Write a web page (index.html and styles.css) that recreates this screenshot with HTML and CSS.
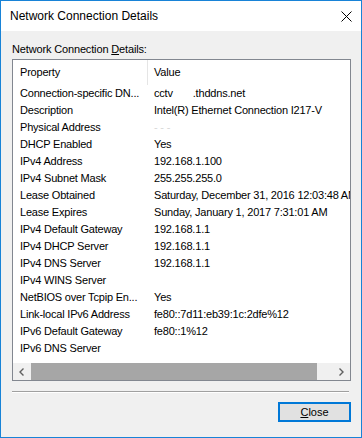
FILE: index.html
```html
<!DOCTYPE html>
<html lang="en">
<head>
  <meta charset="UTF-8" />
  <title>Network Connection Details</title>
  <link rel="stylesheet" href="styles.css">
</head>
<body>
  <div class="window">
    <div class="titlebar">
      <span class="title">Network Connection Details</span>
      <svg class="close-x" width="11" height="11" viewBox="0 0 11 11">
        <path d="M0.5 0.5 L10.5 10.5 M10.5 0.5 L0.5 10.5" stroke="#000" stroke-width="1" fill="none" />
      </svg>
    </div>

    <div class="content">
      <div class="label">Network Connection <u>D</u>etails:</div>

      <div class="listbox">
        <div class="row header">
          <div class="prop">Property</div>
          <div class="val">Value</div>
        </div>

        <div class="rows">
          <div class="row"><div class="prop">Connection-specific DN...</div><div class="val">cctv<span class="blur"></span>.thddns.net</div></div>
          <div class="row"><div class="prop">Description</div><div class="val">Intel(R) Ethernet Connection I217-V</div></div>
          <div class="row"><div class="prop">Physical Address</div><div class="val"><span class="faint">- - -</span></div></div>
          <div class="row"><div class="prop">DHCP Enabled</div><div class="val">Yes</div></div>
          <div class="row"><div class="prop">IPv4 Address</div><div class="val">192.168.1.100</div></div>
          <div class="row"><div class="prop">IPv4 Subnet Mask</div><div class="val">255.255.255.0</div></div>
          <div class="row"><div class="prop">Lease Obtained</div><div class="val">Saturday, December 31, 2016 12:03:48 AM</div></div>
          <div class="row"><div class="prop">Lease Expires</div><div class="val">Sunday, January 1, 2017 7:31:01 AM</div></div>
          <div class="row"><div class="prop">IPv4 Default Gateway</div><div class="val">192.168.1.1</div></div>
          <div class="row"><div class="prop">IPv4 DHCP Server</div><div class="val">192.168.1.1</div></div>
          <div class="row"><div class="prop">IPv4 DNS Server</div><div class="val">192.168.1.1</div></div>
          <div class="row"><div class="prop">IPv4 WINS Server</div><div class="val"></div></div>
          <div class="row"><div class="prop">NetBIOS over Tcpip En...</div><div class="val">Yes</div></div>
          <div class="row"><div class="prop">Link-local IPv6 Address</div><div class="val">fe80::7d11:eb39:1c:2dfe%12</div></div>
          <div class="row"><div class="prop">IPv6 Default Gateway</div><div class="val">fe80::1%12</div></div>
          <div class="row"><div class="prop">IPv6 DNS Server</div><div class="val"></div></div>
        </div>

        <div class="hscroll">
          <div class="arrow">
            <svg width="5" height="8" viewBox="0 0 5 8"><polyline points="4.5,0.5 1,4 4.5,7.5" stroke="#606060" stroke-width="1.4" fill="none" /></svg>
          </div>
          <div class="track"><div class="thumb"></div></div>
          <div class="arrow">
            <svg width="5" height="8" viewBox="0 0 5 8"><polyline points="0.5,0.5 4,4 0.5,7.5" stroke="#606060" stroke-width="1.4" fill="none" /></svg>
          </div>
        </div>
      </div>

      <div class="separator"></div>

      <div class="buttons">
        <button class="btn"><u>C</u>lose</button>
      </div>
    </div>
  </div>
</body>
</html>
```

FILE: styles.css
```css
* {
  box-sizing: border-box;
  margin: 0;
  padding: 0;
}

body {
  font-family: 'Liberation Sans', Arial, sans-serif;
  font-size: 11px;
  color: #000;
  background: #f0f0f0;
}

.window {
  width: 362px;
  height: 438px;
  border: 1px solid #1883d7;
  display: flex;
  flex-direction: column;
}

.titlebar {
  height: 30px;
  background: #fff;
  display: flex;
  align-items: center;
  justify-content: space-between;
  padding: 0 9px;
}

.title {
  font-size: 12px;
}

.content {
  flex: 1;
  background: #f0f0f0;
  padding: 0 10px 0 11px;
  display: flex;
  flex-direction: column;
}

.label {
  margin-top: 11px;
  line-height: 14px;
  letter-spacing: -0.15px;
}

.listbox {
  margin-top: 3px;
  height: 322px;
  border: 1px solid #828790;
  background: #fff;
  display: flex;
  flex-direction: column;
  overflow: hidden;
}

.rows {
  flex: 1;
}

.row {
  display: flex;
  height: 17px;
  line-height: 17px;
  white-space: nowrap;
  letter-spacing: -0.2px;
}

.row.header {
  height: 25px;
  line-height: 25px;
}

.prop {
  width: 135px;
  flex-shrink: 0;
  padding-left: 7px;
  overflow: hidden;
}

.header .prop {
  border-right: 1px solid #e5e5e5;
}

.val {
  padding-left: 6px;
  flex-shrink: 0;
}

.blur {
  display: inline-block;
  width: 20px;
}

.faint {
  color: #d8d8d8;
}

.hscroll {
  height: 17px;
  display: flex;
  background: #f0f0f0;
}

.arrow {
  width: 17px;
  display: flex;
  align-items: center;
  justify-content: center;
}

.track {
  flex: 1;
  padding: 0 0 0 1px;
}

.thumb {
  width: 286px;
  height: 100%;
  background: #a6a6a6;
}

.separator {
  margin-top: 10px;
  margin-right: 2px;
  border-top: 1px solid #a0a0a0;
  border-bottom: 1px solid #fff;
}

.buttons {
  display: flex;
  justify-content: flex-end;
  margin-top: 9px;
}

.btn {
  width: 73px;
  height: 20px;
  border: 2px solid #0078d7;
  background: #e1e1e1;
  font-family: 'Liberation Sans', Arial, sans-serif;
  font-size: 11px;
  color: #000;
}
```
